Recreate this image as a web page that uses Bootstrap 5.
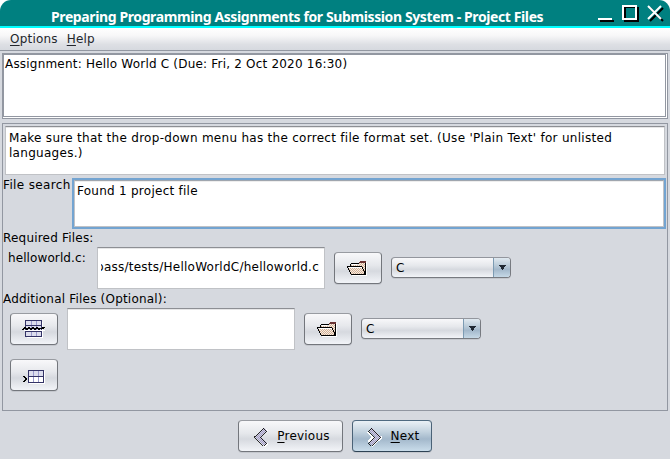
<!DOCTYPE html>
<html lang="en">
<head>
<meta charset="utf-8">
<title>Preparing Programming Assignments for Submission System - Project Files</title>
<link href="https://cdn.jsdelivr.net/npm/bootstrap@5.3.0/dist/css/bootstrap.min.css" rel="stylesheet">
<style>
html,body{height:459px;overflow:hidden}
body{background:#d6d9df;font:12px/15px "DejaVu Sans",sans-serif;letter-spacing:.2px;color:#000;width:670px}
.titlebar{height:28px;background:#008080;border-bottom:2px solid #0ff;border-radius:11px 11px 0 0;padding-left:51px}
.corners{background:#fff;height:28px}
.titlebar h1{font:bold 14px/18px "Noto Sans",sans-serif;letter-spacing:-.39px;color:#fff;margin:8px 0 0;white-space:nowrap}
.winbtns{margin:4px 4px 0 auto}
.menus{height:23px;background:linear-gradient(#fff,#f7f7f8 35%,#dddfe4 75%,#d6d9df);border-bottom:1px solid #9297a1;padding:4px 0 0 10px;gap:9px;color:#23262c}
.pane1{height:66px;margin:2px 2px 0;border:1px solid #9297a1;background:#fff;padding:0 1px 1px 0}
.pane1>div{height:63px;border:1px solid #9297a1;padding:2px 1px}
.pane2{height:288px;margin:4px 2px 0;border:1px solid #9297a1}
.fld{background:#fff;border:1px solid #c0c2c6;border-top-color:#8d8f94;box-shadow:inset 0 1px #e6e6e7}
.note{height:49px;margin:2px 2px 0;padding:4px 3px;letter-spacing:.285px}
.srch-label{width:68px;padding-top:3px;letter-spacing:.35px}
.srch{height:51px;flex:1;border:2px solid #73a4d1;margin:3px 1px 0 1px}
.srch>div{height:47px;border:1px solid #c0c2c6;border-top-color:#a0a6ae;background:#fff;padding:3px 2px;box-shadow:inset 0 1px #eee;letter-spacing:.26px}
.req-label{height:18px;padding-top:2px}
.file-row{height:42px}
.file-name{width:94px;padding:4px 0 0 5px;letter-spacing:.1px}
.add-label{height:19px;padding-top:3px}
.add-row{padding-left:7px}
.path{width:228px;height:42px;padding:12px 0;overflow:hidden}
.path>span{display:flex;justify-content:flex-end;overflow:hidden;white-space:nowrap;margin:0 5px 0 3px;height:17px}
.path>span.tail{letter-spacing:.24px}
.nbtn{height:32px;width:48px;padding:0;border:1px solid #73767c;border-top-color:#989ba1;border-radius:4px;background:linear-gradient(#f8f8fa,#e6e8ec 40%,#d6d9df 60%,#f2f4f8);box-shadow:0 1px #c4c7cd;font-size:12px;line-height:15px;letter-spacing:.21px;color:#000;display:flex;align-items:center;justify-content:center}
.nbtn.next{border-color:#4f6a80 #4a6277 #2d4254;background:linear-gradient(#eaf1f6,#c4d3df 35%,#a3b8cb 60%,#c9dcea)}
.browse{margin:5px 9px 0;padding:2px 1px 0 0}
.del{margin:5px 9px 0 0}
.add{margin:9px 0 0 7px}
.nbtn.prev{width:105px;gap:8px;padding:1px 0 0 2px}
.nbtn.next{width:80px;gap:8px;padding:1px 0 0 2px}
.combo{width:120px;height:21px;margin-top:10px;border:1px solid #777a80;border-top-color:#93969d;border-radius:4px;background:linear-gradient(#f8f8fa,#e6e8ec 40%,#d6d9df 60%,#f2f4f8);box-shadow:0 1px #c4c7cd;overflow:hidden}
.combo>span{padding:3px 0 0 4px}
.combo>b{width:17px;border-left:1px solid #7c9bb3;background:linear-gradient(#e0e9f0,#b9cad8 40%,#a3b8cb 60%,#c5d8e6);display:flex;justify-content:center;align-items:center}
.acts{margin:9px 0 0;padding-left:238px;gap:9px}
u{text-underline-offset:2px;text-decoration-thickness:1px}
svg{display:block;shape-rendering:crispEdges;flex:none}
</style>
<script src="https://cdn.jsdelivr.net/npm/bootstrap@5.3.0/dist/js/bootstrap.bundle.min.js"></script>
</head>
<body>
<svg width="0" height="0">
<defs>
<pattern id="dots" width="2" height="2" patternUnits="userSpaceOnUse"><rect width="2" height="2" fill="#f9ecdf"/><path fill="#d0b098" d="M0 0h1v1H0zM1 1h1v1H1z"/></pattern>
<pattern id="violet" width="2" height="2" patternUnits="userSpaceOnUse"><rect width="2" height="2" fill="#d0cde2"/><path fill="#a29ec4" d="M0 0h1v1H0zM1 1h1v1H1z"/></pattern>
<symbol id="folder" viewBox="0 0 21 16">
<path fill="#fff" d="M11 2h1v-1h8v14H5v-1h14z"/>
<path fill="#6b3434" d="M12 1h1V0h6v2h-7z"/>
<path fill="url(#dots)" d="M4 4h8V2h7v12H5L1 7h3z"/>
<path fill="#fff" d="M2 6h14v1H2zM5 3h5v1H5z"/>
<path fill="#000" d="M4 2h7v1H4zM3 3h1v2H3zM11 2h1v1h-1zM0 5h15v1H0zM0 6h1v1H0zM1 7h1v2H1zM2 9h1v2H2zM3 11h1v2H3zM4 13h15v1H4zM18 2h1v12h-1zM15 6h1v2h-1zM16 8h1v2h-1zM17 10h1v3h-1z"/>
</symbol>
</defs>
</svg>
<div class="corners">
<header class="titlebar d-flex">
<h1>Preparing Programming Assignments for Submission System - Project Files</h1>
<svg class="winbtns" width="68" height="20" viewBox="0 0 68 20">
<path fill="#000" d="M2 16h14v2H2zM26 3h15v15H26z"/>
<path fill="#fff" d="M0 14h14v2H0z"/>
<path fill="#008080" d="M28 4h11v11H28z"/><path fill="#000" d="M26 3h11v1H26zM26 3h1v11h-1z"/>
<path fill="none" stroke="#fff" stroke-width="2" d="M25 2h13v13H25z"/>
<path fill="none" stroke="#000" stroke-width="2" d="m52 4 13 13M65 4 52 17" shape-rendering="auto"/>
<path fill="none" stroke="#fff" stroke-width="2" d="m50 2 13 13M63 2 50 15" shape-rendering="auto"/>
</svg>
</header>
</div>
<nav class="menus d-flex"><span><u>O</u>ptions</span><span><u>H</u>elp</span></nav>
<section class="pane1"><div>Assignment: Hello World C (Due: Fri, 2 Oct 2020 16:30)</div></section>
<main class="pane2">
<div class="fld note">Make sure that the drop-down menu has the correct file format set. (Use 'Plain Text' for unlisted<br>languages.)</div>
<div class="d-flex"><span class="srch-label text-nowrap">File search</span><div class="srch"><div>Found 1 project file</div></div></div>
<div class="req-label">Required Files:</div>
<div class="file-row d-flex align-items-start"><span class="file-name text-nowrap">helloworld.c:</span>
<div class="fld path"><span class="tail">pass/tests/HelloWorldC/helloworld.c</span></div>
<button class="nbtn browse"><svg width="21" height="16"><use href="#folder"/></svg></button>
<div class="combo d-flex justify-content-between"><span>C</span><b><svg width="7" height="5"><path fill="#1f2833" d="M0 0h7v1H6v1H5v2H4v1H3V4H2V2H1V1H0z"/></svg></b></div></div>
<div class="add-label">Additional Files (Optional):</div>
<div class="add-row d-flex align-items-start"><button class="nbtn del"><svg width="24" height="20" viewBox="0 0 24 20">
<path fill="#fff" d="M5 3h16v16H5z"/><path fill="#dcdded" d="M4 2h15v15H4z"/><path fill="none" stroke="#99c" d="M9.500 2v15M14.500 2v15"/><path fill="none" stroke="#336" d="M3.500 1.500h16v16h-16zM4 6.500h16M4 12.500h16"/><path fill="#fff" d="M2 11h21v1H2z"/><path fill="#000" d="M1 9h21v1H1zM0 10h2v1H0zM4 10h2v1H4zM8 10h2v1H8zM12 10h2v1h-2zM16 10h2v1h-2zM20 8h3v1h-3zM2 8h2v1H2zM6 8h2v1H6zM10 8h2v1h-2zM14 8h2v1h-2z"/></svg></button>
<div class="fld path"></div>
<button class="nbtn browse"><svg width="21" height="16"><use href="#folder"/></svg></button>
<div class="combo d-flex justify-content-between"><span>C</span><b><svg width="7" height="5"><path fill="#1f2833" d="M0 0h7v1H6v1H5v2H4v1H3V4H2V2H1V1H0z"/></svg></b></div></div>
<button class="nbtn add"><svg width="24" height="18" viewBox="0 0 24 18">
<path fill="#fff" d="M7 5h16v13H7z"/><path fill="#dcdded" d="M6 4h15v6H6z"/><path fill="none" stroke="#99c" d="M11.500 5v11M16.500 5v11"/><path fill="none" stroke="#336" d="M6.500 4.500h15v12h-15zM6 10.500h16"/><path fill="#000" d="M1 10h2v1h1v1h1v2H4v1H3v1H1v-1h1v-1h1v-2H2v-1H1z"/></svg></button>
</main>
<footer class="acts d-flex">
<button class="nbtn prev"><svg width="16" height="21" viewBox="0 0 16 21"><path fill="none" stroke="#fff" stroke-width="2" d="m14 4-7 7 7 7-3 3"/><path fill="url(#violet)" stroke="#111" stroke-width=".9" d="M10.500 1.500l-9 9 9 9 3-3-6-6 6-6z"/></svg><span><u>P</u>revious</span></button>
<button class="nbtn next"><svg width="16" height="21" viewBox="0 0 16 21"><path fill="none" stroke="#fff" stroke-width="2" d="m5 20 10-9M1 6l5 5-5 5"/><path fill="url(#violet)" stroke="#111" stroke-width=".9" d="M4.500 1.500l9 9-9 9-3-3 6-6-6-6z"/></svg><span><u>N</u>ext</span></button>
</footer>
</body>
</html>
